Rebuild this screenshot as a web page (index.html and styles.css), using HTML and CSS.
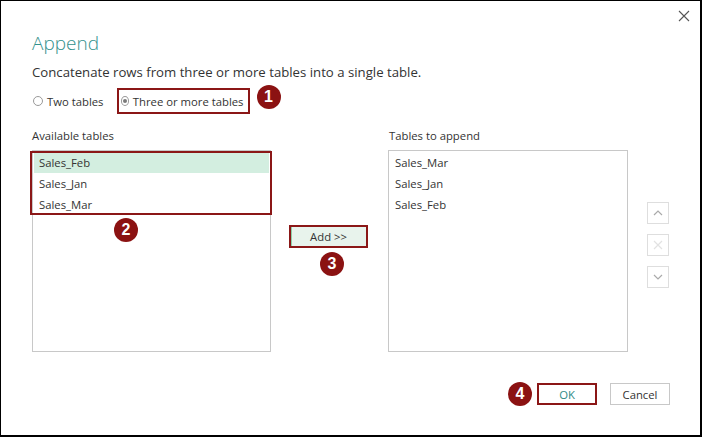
FILE: index.html
```html
<!DOCTYPE html>
<html>
<head>
<meta charset="utf-8">
<link rel="stylesheet" href="styles.css">
</head>
<body>
<div class="dialog">
  <button class="close" aria-label="Close">
    <svg width="12" height="12" viewBox="0 0 12 12"><path d="M1 1 L11 11 M11 1 L1 11" stroke="#555" stroke-width="1.1" fill="none"/></svg>
  </button>
  <h1 class="title">Append</h1>
  <p class="desc">Concatenate rows from three or more tables into a single table.</p>
  <div class="mode">
    <label class="radio"><span class="dot"></span>Two tables</label>
    <label class="radio checked boxed"><span class="dot"></span>Three or more tables<span class="badge b1">1</span></label>
  </div>
  <div class="tables">
    <div class="col">
      <div class="label">Available tables</div>
      <div class="list">
        <div class="row selected">Sales_Feb</div>
        <div class="row">Sales_Jan</div>
        <div class="row">Sales_Mar</div>
        <div class="group"></div>
        <span class="badge b2">2</span>
      </div>
    </div>
    <div class="mid">
      <button class="add">Add &gt;&gt;<span class="badge b3">3</span></button>
    </div>
    <div class="col">
      <div class="label">Tables to append</div>
      <div class="list">
        <div class="row">Sales_Mar</div>
        <div class="row">Sales_Jan</div>
        <div class="row">Sales_Feb</div>
      </div>
    </div>
    <div class="side">
      <button class="sbtn"><svg width="10" height="6" viewBox="0 0 10 6"><path d="M1 5 L5 1 L9 5" stroke="#aaa" stroke-width="1.2" fill="none"/></svg></button>
      <button class="sbtn"><svg width="10" height="10" viewBox="0 0 10 10"><path d="M1 1 L9 9 M9 1 L1 9" stroke="#e2e2e2" stroke-width="1.2" fill="none"/></svg></button>
      <button class="sbtn"><svg width="10" height="6" viewBox="0 0 10 6"><path d="M1 1 L5 5 L9 1" stroke="#aaa" stroke-width="1.2" fill="none"/></svg></button>
    </div>
  </div>
  <div class="footer">
    <button class="btn ok">OK<span class="badge b4">4</span></button>
    <button class="btn">Cancel</button>
  </div>
</div>
</body>
</html>
```
FILE: styles.css
```css
* { box-sizing: border-box; }
html, body { margin: 0; padding: 0; background: #fff; }
body { font-family: "Open Sans", "Noto Sans", sans-serif; font-size: 11.3px; color: #333; }

.dialog {
  position: relative;
  width: 702px;
  height: 437px;
  border: 1px solid #000;
  border-bottom-width: 2px;
  border-right-width: 2px;
  padding: 28px 30px 0 30px;
  background: #fff;
}

.close {
  position: absolute;
  top: 8px;
  right: 9px;
  width: 14px;
  height: 14px;
  padding: 0;
  border: 0;
  background: none;
  display: flex;
  align-items: center;
  justify-content: center;
}

.title {
  margin: 0;
  padding-left: 1px;
  font-size: 19px;
  font-weight: 300;
  line-height: 28px;
  color: #33918c;
}

.desc {
  margin: 5px 0 0 0;
  padding-left: 1px;
  font-size: 13.2px;
  line-height: 20px;
}

.mode {
  margin-top: 6px;
  height: 26px;
  display: flex;
  align-items: center;
}

.radio {
  position: relative;
  display: flex;
  align-items: center;
  gap: 4px;
  height: 26px;
  padding-left: 2px;
  font-size: 11.3px;
  white-space: nowrap;
}

.radio .dot {
  width: 10px;
  height: 10px;
  border: 1px solid #9a9a9a;
  border-radius: 50%;
  display: flex;
  align-items: center;
  justify-content: center;
}

.radio.checked .dot::after {
  content: "";
  width: 4px;
  height: 4px;
  border-radius: 50%;
  background: #7a7a7a;
}

.boxed {
  margin-left: 13px;
  border: 2px solid #8b1717;
  padding: 0 4px 0 2px;
  width: 133px;
}

.badge {
  position: absolute;
  width: 24px;
  height: 24px;
  border-radius: 50%;
  background: #8b1212;
  color: #fff;
  font-family: "Liberation Sans", Arial, sans-serif;
  font-weight: bold;
  font-size: 16px;
  line-height: 24px;
  text-align: center;
}

.b1 { left: 138px; top: -5px; }

.tables {
  margin-top: 13px;
  display: grid;
  grid-template-columns: 240px 117px 240px auto;
  align-items: start;
}

.col { display: flex; flex-direction: column; }

.label {
  padding-left: 1px;
  font-size: 11.3px;
  line-height: 18px;
  margin-bottom: 5px;
}

.list {
  position: relative;
  margin-left: 1px;
  height: 202px;
  border: 1px solid #c8c8c8;
  padding: 1px 1px;
}

.col + .mid + .col .list { margin-left: 0; }

.row {
  height: 21px;
  line-height: 21px;
  padding-left: 5px;
  font-size: 11.3px;
}

.row.selected { background: #d3eee0; }

.group {
  position: absolute;
  left: -3px;
  top: 0;
  width: 242px;
  height: 64px;
  border: 2px solid #8b1717;
}

.b2 { left: 81px; top: 67px; }

.mid {
  padding-top: 98px;
  padding-left: 18px;
}

.add {
  position: relative;
  width: 79px;
  height: 23px;
  padding: 0;
  border: 2px solid #8b1717;
  background: #e8f3ec;
  box-shadow: inset 1px 0 0 #8fcfa8;
  font-family: inherit;
  font-size: 11.3px;
  color: #333;
}

.b3 { left: 29px; top: 25px; }

.side {
  padding-top: 75px;
  padding-left: 19px;
  display: flex;
  flex-direction: column;
  gap: 10px;
}

.sbtn {
  width: 22px;
  height: 22px;
  padding: 0;
  border: 1px solid #dedede;
  background: #fff;
  display: flex;
  align-items: center;
  justify-content: center;
}

.footer {
  margin-top: 31px;
  display: flex;
  justify-content: flex-end;
  gap: 13px;
}

.btn {
  position: relative;
  width: 60px;
  height: 22px;
  padding: 0;
  border: 1px solid #c8c8c8;
  background: #fff;
  font-family: inherit;
  font-size: 11.3px;
  color: #333;
}

.btn.ok {
  border: 2px solid #8b1717;
  color: #2f8a86;
}

.b4 { left: -31px; top: -3px; }
```
